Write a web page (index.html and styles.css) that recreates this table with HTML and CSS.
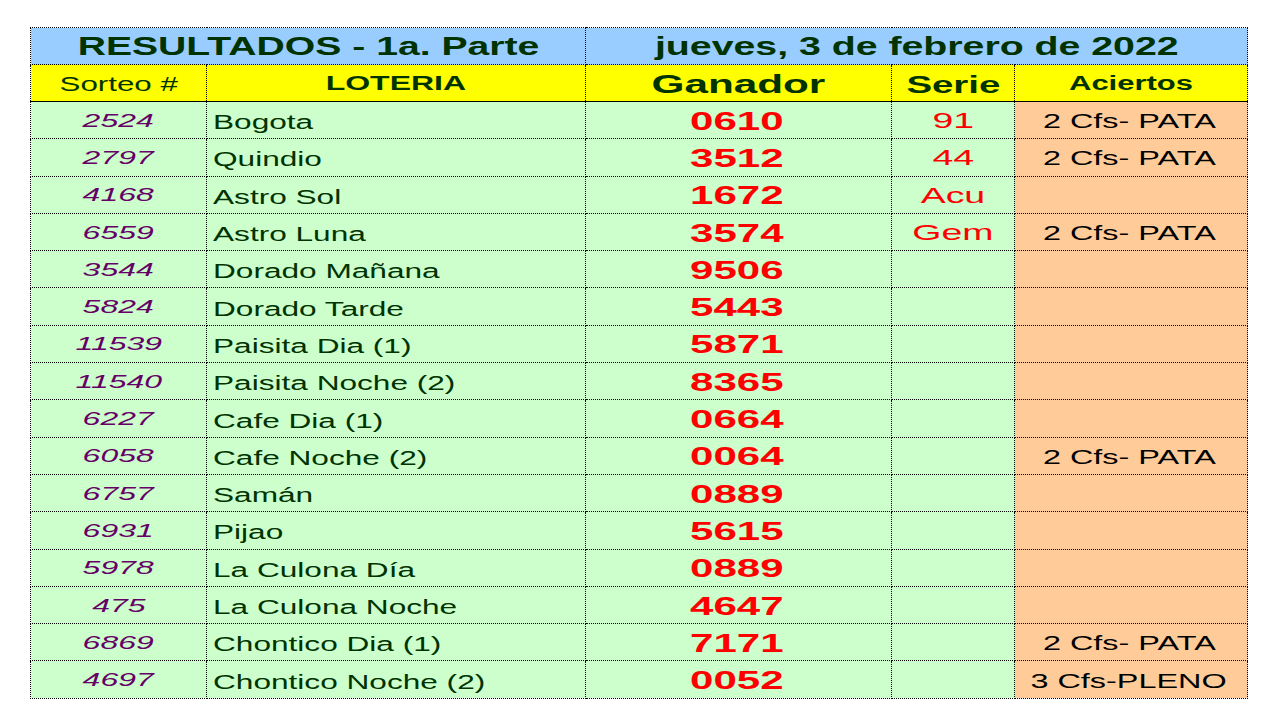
FILE: index.html
```html
<!DOCTYPE html>
<html lang="es">
<head>
<meta charset="utf-8">
<title>Resultados - 1a. Parte</title>
<link rel="stylesheet" href="styles.css">
</head>
<body>
<table class="results">
  <colgroup>
    <col class="c-sorteo"><col class="c-loteria"><col class="c-ganador"><col class="c-serie"><col class="c-aciertos">
  </colgroup>
  <thead>
    <tr class="row-title">
      <th colspan="2"><span class="sx t-left">RESULTADOS - 1a. Parte</span></th>
      <th colspan="3"><span class="sx t-right">jueves, 3 de febrero de 2022</span></th>
    </tr>
    <tr class="row-head">
      <th><span class="sx h-sorteo">Sorteo #</span></th>
      <th><span class="sx h-loteria">LOTERIA</span></th>
      <th><span class="sx h-ganador">Ganador</span></th>
      <th><span class="sx h-serie">Serie</span></th>
      <th><span class="sx h-aciertos">Aciertos</span></th>
    </tr>
  </thead>
  <tbody>
    <tr><td class="num"><span class="sx">2524</span></td><td class="name"><span class="sx">Bogota</span></td><td class="win"><span class="sx">0610</span></td><td class="serie"><span class="sx">91</span></td><td class="hit"><span class="sx">2 Cfs- PATA</span></td></tr>
    <tr><td class="num"><span class="sx">2797</span></td><td class="name"><span class="sx">Quindio</span></td><td class="win"><span class="sx">3512</span></td><td class="serie"><span class="sx">44</span></td><td class="hit"><span class="sx">2 Cfs- PATA</span></td></tr>
    <tr><td class="num"><span class="sx">4168</span></td><td class="name"><span class="sx">Astro Sol</span></td><td class="win"><span class="sx">1672</span></td><td class="serie"><span class="sx">Acu</span></td><td class="hit"></td></tr>
    <tr><td class="num"><span class="sx">6559</span></td><td class="name"><span class="sx">Astro Luna</span></td><td class="win"><span class="sx">3574</span></td><td class="serie"><span class="sx">Gem</span></td><td class="hit"><span class="sx">2 Cfs- PATA</span></td></tr>
    <tr><td class="num"><span class="sx">3544</span></td><td class="name"><span class="sx">Dorado Mañana</span></td><td class="win"><span class="sx">9506</span></td><td class="serie"></td><td class="hit"></td></tr>
    <tr><td class="num"><span class="sx">5824</span></td><td class="name"><span class="sx">Dorado Tarde</span></td><td class="win"><span class="sx">5443</span></td><td class="serie"></td><td class="hit"></td></tr>
    <tr><td class="num"><span class="sx">11539</span></td><td class="name"><span class="sx">Paisita Dia (1)</span></td><td class="win"><span class="sx">5871</span></td><td class="serie"></td><td class="hit"></td></tr>
    <tr><td class="num"><span class="sx">11540</span></td><td class="name"><span class="sx">Paisita Noche (2)</span></td><td class="win"><span class="sx">8365</span></td><td class="serie"></td><td class="hit"></td></tr>
    <tr><td class="num"><span class="sx">6227</span></td><td class="name"><span class="sx">Cafe Dia (1)</span></td><td class="win"><span class="sx">0664</span></td><td class="serie"></td><td class="hit"></td></tr>
    <tr><td class="num"><span class="sx">6058</span></td><td class="name"><span class="sx">Cafe Noche (2)</span></td><td class="win"><span class="sx">0064</span></td><td class="serie"></td><td class="hit"><span class="sx">2 Cfs- PATA</span></td></tr>
    <tr><td class="num"><span class="sx">6757</span></td><td class="name"><span class="sx">Samán</span></td><td class="win"><span class="sx">0889</span></td><td class="serie"></td><td class="hit"></td></tr>
    <tr><td class="num"><span class="sx">6931</span></td><td class="name"><span class="sx">Pijao</span></td><td class="win"><span class="sx">5615</span></td><td class="serie"></td><td class="hit"></td></tr>
    <tr><td class="num"><span class="sx">5978</span></td><td class="name"><span class="sx">La Culona Día</span></td><td class="win"><span class="sx">0889</span></td><td class="serie"></td><td class="hit"></td></tr>
    <tr><td class="num"><span class="sx">475</span></td><td class="name"><span class="sx">La Culona Noche</span></td><td class="win"><span class="sx">4647</span></td><td class="serie"></td><td class="hit"></td></tr>
    <tr><td class="num"><span class="sx">6869</span></td><td class="name"><span class="sx">Chontico Dia (1)</span></td><td class="win"><span class="sx">7171</span></td><td class="serie"></td><td class="hit"><span class="sx">2 Cfs- PATA</span></td></tr>
    <tr><td class="num"><span class="sx">4697</span></td><td class="name"><span class="sx">Chontico Noche (2)</span></td><td class="win"><span class="sx">0052</span></td><td class="serie"></td><td class="hit"><span class="sx">3 Cfs-PLENO</span></td></tr>
  </tbody>
</table>
</body>
</html>
```

FILE: styles.css
```css
html, body {
  margin: 0;
  padding: 0;
  background: #ffffff;
}

body {
  font-family: "Liberation Sans", Arial, sans-serif;
}

.results {
  margin: 27px 0 0 30px;
  border-collapse: collapse;
  table-layout: fixed;
  width: 1217px;
}

.c-sorteo { width: 176px; }
.c-loteria { width: 379px; }
.c-ganador { width: 306px; }
.c-serie { width: 123px; }
.c-aciertos { width: 233px; }

.results th,
.results td {
  border: 1px dotted #000000;
  padding: 0;
  text-align: center;
  vertical-align: middle;
  white-space: nowrap;
  overflow: visible;
  line-height: 1;
}

.sx {
  display: inline-block;
  transform-origin: center center;
}

/* title row */
.row-title { height: 37px; }
.row-title th {
  background: #99ccff;
  color: #003300;
  font-weight: bold;
  font-size: 25px;
}
.t-left { transform: scaleX(1.565); }
.t-right { transform: scaleX(1.57); }

/* header row */
.row-head { height: 37px; }
.row-head th {
  background: #ffff00;
  color: #003300;
  border-bottom: 1px solid #000000;
  font-weight: bold;
}
.h-sorteo { font-size: 21px; font-weight: normal; transform: scaleX(1.49); }
.h-loteria { font-size: 20px; transform: scaleX(1.6); }
.h-ganador { font-size: 25px; transform: scaleX(1.69); position: relative; top: 1px; }
.h-serie { font-size: 24px; transform: scaleX(1.6); position: relative; top: 2px; }
.h-aciertos { font-size: 20px; transform: scaleX(1.55); }

/* body rows */
.results tbody tr { height: 37.3px; }
.results tbody td { background: #ccffcc; }

.num {
  color: #660066;
  font-style: italic;
  font-size: 19px;
}
.num .sx { transform: scaleX(1.68); }

.results td.name {
  text-align: left;
  padding-left: 6px;
  color: #003300;
  font-size: 20px;
}
.name .sx { transform: scaleX(1.58); transform-origin: left center; position: relative; top: 2px; }

.win {
  color: #ff0000;
  font-weight: bold;
  font-size: 25px;
}
.win .sx { transform: translateX(-2px) scaleX(1.68); position: relative; top: 1px; }

.serie {
  color: #ff0000;
  font-size: 22px;
}
.serie .sx { transform: scaleX(1.7); position: relative; top: 1px; }

.results td.hit {
  background: #ffcc99;
  color: #000000;
  font-size: 20px;
}
.hit .sx { transform: translateX(-2px) scaleX(1.62); position: relative; top: 1px; }
```
